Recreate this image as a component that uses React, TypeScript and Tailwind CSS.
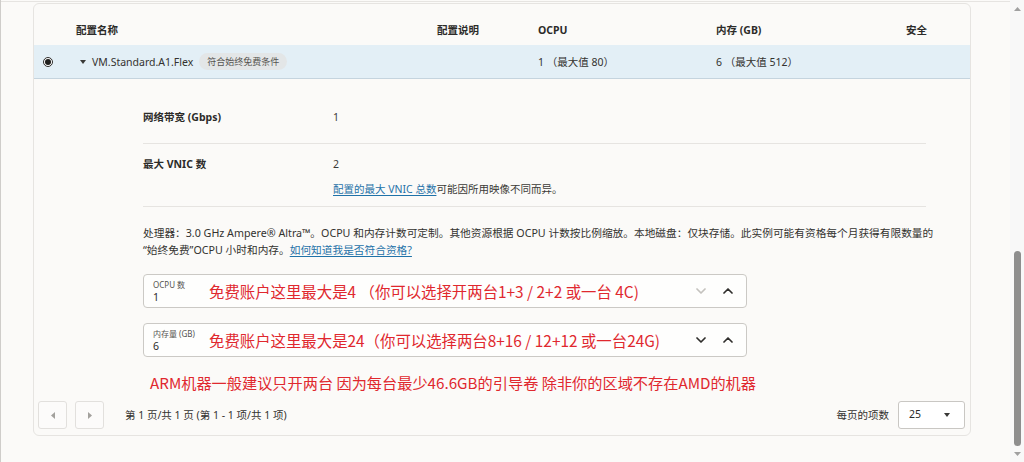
import React from "react";

function ChevronDown({ color }: { color: string }) {
  return (
    <svg width="10" height="6" viewBox="0 0 10 6" fill="none">
      <polyline points="1,1 5,5 9,1" stroke={color} strokeWidth="1.7" strokeLinecap="round" strokeLinejoin="round" />
    </svg>
  );
}

function ChevronUp({ color }: { color: string }) {
  return (
    <svg width="10" height="6" viewBox="0 0 10 6" fill="none">
      <polyline points="1,5 5,1 9,5" stroke={color} strokeWidth="1.7" strokeLinecap="round" strokeLinejoin="round" />
    </svg>
  );
}

function Tri({ dir, color, w = 7, h = 4 }: { dir: "down" | "up" | "left" | "right"; color: string; w?: number; h?: number }) {
  let pts = "";
  if (dir === "down") pts = `0,0 ${w},0 ${w / 2},${h}`;
  if (dir === "up") pts = `0,${h} ${w},${h} ${w / 2},0`;
  if (dir === "left") pts = `${w},0 ${w},${h} 0,${h / 2}`;
  if (dir === "right") pts = `0,0 0,${h} ${w},${h / 2}`;
  return (
    <svg width={w} height={h} viewBox={`0 0 ${w} ${h}`}>
      <polygon points={pts} fill={color} />
    </svg>
  );
}

export default function App() {
  return (
    <div className="flex h-[462px] w-[1024px] overflow-hidden bg-[#fbfaf8] font-['Noto_Sans','Noto_Sans_CJK_SC',sans-serif] text-[#3b3a37]">
      <div className="w-px shrink-0 bg-[#cfcdca]" />
      <div className="flex min-w-0 flex-1 flex-col">
        <div className="mt-px h-px bg-[#e6e4e1]" />
        <div className="mt-px pl-[32px]">
          <div className="flex h-[433px] w-[938px] flex-col rounded-[6px] border border-[#e6e4e1] bg-[#fbfaf8]">
            {/* header */}
            <div className="grid h-[41px] grid-cols-[42px_361px_101px_178px_190px_1fr] items-end pb-[8px] text-[10.5px] font-bold leading-[14px] text-[#2c2b29]">
              <div />
              <div>配置名称</div>
              <div>配置说明</div>
              <div>OCPU</div>
              <div>内存 (GB)</div>
              <div>安全</div>
            </div>
            {/* selected row */}
            <div className="grid h-[34px] grid-cols-[42px_361px_101px_178px_190px_1fr] items-center border-b border-[#c5d4de] bg-[#e3eff6] text-[10.5px] leading-[14px] text-[#33322f]">
              <div className="pl-[9px]">
                <div className="flex h-[10px] w-[10px] items-center justify-center rounded-full border border-[#2f2e2c] bg-white">
                  <div className="h-[6px] w-[6px] rounded-full bg-[#1f1e1c]" />
                </div>
              </div>
              <div className="flex items-center pl-[4px]">
                <Tri dir="down" color="#3a3937" w={6} h={4} />
                <span className="ml-[6px] text-[10.5px]">VM.Standard.A1.Flex</span>
                <span className="ml-[6px] flex h-[17px] items-center rounded-full bg-[#e3e6e7] px-[8px] text-[9px] text-[#55544f]">符合始终免费条件</span>
              </div>
              <div />
              <div>1 （最大值 80）</div>
              <div>6 （最大值 512）</div>
              <div />
            </div>
            {/* details */}
            <div className="ml-[109px] mr-[44px] flex flex-col pt-[30px] text-[10.5px] leading-[16px]">
              <div className="flex border-b border-[#e6e4e1] pb-[18px]">
                <div className="w-[190px] font-bold text-[#2c2b29]">网络带宽 (Gbps)</div>
                <div>1</div>
              </div>
              <div className="flex border-b border-[#e6e4e1] pt-[12px] pb-[9px]">
                <div className="w-[190px] font-bold text-[#2c2b29]">最大 VNIC 数</div>
                <div className="flex flex-col gap-[9px]">
                  <div>2</div>
                  <div>
                    <span className="text-[#1f72a8] underline underline-offset-2">配置的最大 VNIC 总数</span>
                    可能因所用映像不同而异。
                  </div>
                </div>
              </div>
              <div className="mt-[18px] whitespace-nowrap text-[10.7px] leading-[17px] text-[#33322f]">
                处理器：3.0 GHz Ampere® Altra™。OCPU 和内存计数可定制。其他资源根据 OCPU 计数按比例缩放。本地磁盘：仅块存储。此实例可能有资格每个月获得有限数量的
                <br />
                “始终免费”OCPU 小时和内存。
                <span className="text-[#1f72a8] underline underline-offset-2">如何知道我是否符合资格?</span>
              </div>
              {/* box 1 */}
              <div className="mt-[15px] flex h-[34px] w-[604px] items-center rounded-[4px] border border-[#cbc9c5] bg-[#fefefd] pl-[9px] pr-[13px]">
                <div className="flex w-[56px] shrink-0 flex-col">
                  <span className="text-[8px] leading-[11px] text-[#55544f]">OCPU 数</span>
                  <span className="text-[10.5px] leading-[14px] text-[#2c2b29]">1</span>
                </div>
                <div className="flex-1 font-['Noto_Sans_CJK_SC',sans-serif] text-[15.4px] leading-[20px] text-[#e0282e]">免费账户这里最大是4 （你可以选择开两台1+3 / 2+2 或一台 4C)</div>
                <div className="flex items-center gap-[17px]">
                  <ChevronDown color="#c4c2be" />
                  <ChevronUp color="#2f2e2c" />
                </div>
              </div>
              {/* box 2 */}
              <div className="mt-[15px] flex h-[34px] w-[604px] items-center rounded-[4px] border border-[#cbc9c5] bg-[#fefefd] pl-[9px] pr-[13px]">
                <div className="flex w-[56px] shrink-0 flex-col">
                  <span className="text-[8px] leading-[11px] text-[#55544f]">内存量 (GB)</span>
                  <span className="text-[10.5px] leading-[14px] text-[#2c2b29]">6</span>
                </div>
                <div className="flex-1 font-['Noto_Sans_CJK_SC',sans-serif] text-[15.4px] leading-[20px] text-[#e0282e]">免费账户这里最大是24（你可以选择两台8+16 / 12+12 或一台24G)</div>
                <div className="flex items-center gap-[17px]">
                  <ChevronDown color="#2f2e2c" />
                  <ChevronUp color="#2f2e2c" />
                </div>
              </div>
            </div>
            <div className="ml-[116px] mt-[15px] font-['Noto_Sans_CJK_SC',sans-serif] text-[15.2px] leading-[20px] text-[#e0282e]">
              ARM机器一般建议只开两台 因为每台最少46.6GB的引导卷 除非你的区域不存在AMD的机器
            </div>
            {/* pagination */}
            <div className="mt-[9px] flex items-center pl-[4px] pr-[5px]">
              <div className="flex h-[28px] w-[29px] items-center justify-center rounded-[3px] border border-[#e2e0dd] bg-[#fcfbfa]">
                <Tri dir="left" color="#a3a19d" w={4} h={7} />
              </div>
              <div className="ml-[8px] flex h-[28px] w-[29px] items-center justify-center rounded-[3px] border border-[#e2e0dd] bg-[#fcfbfa]">
                <Tri dir="right" color="#a3a19d" w={4} h={7} />
              </div>
              <div className="ml-[21px] text-[10.5px] leading-[14px] text-[#33322f]">第 1 页/共 1 页 (第 1 - 1 项/共 1 项)</div>
              <div className="flex-1" />
              <div className="text-[10.5px] leading-[14px] text-[#33322f]">每页的项数</div>
              <div className="ml-[9px] flex h-[28px] w-[67px] items-center justify-between rounded-[3px] border border-[#c9c7c3] bg-white pl-[10px] pr-[14px] text-[10.5px] text-[#2c2b29]">
                <span>25</span>
                <Tri dir="down" color="#3a3937" w={6} h={4} />
              </div>
            </div>
          </div>
        </div>
      </div>
      {/* scrollbar */}
      <div className="flex w-[14px] shrink-0 flex-col items-center bg-[#f8f8f8] pt-[7px] pb-[6px]">
        <Tri dir="up" color="#a0a0a0" w={7} h={4} />
        <div className="flex-1" />
        <div className="h-[195px] w-[7px] rounded-full bg-[#8e8e8e]" />
        <div className="mt-[6px]">
          <Tri dir="down" color="#a0a0a0" w={7} h={4} />
        </div>
      </div>
    </div>
  );
}
